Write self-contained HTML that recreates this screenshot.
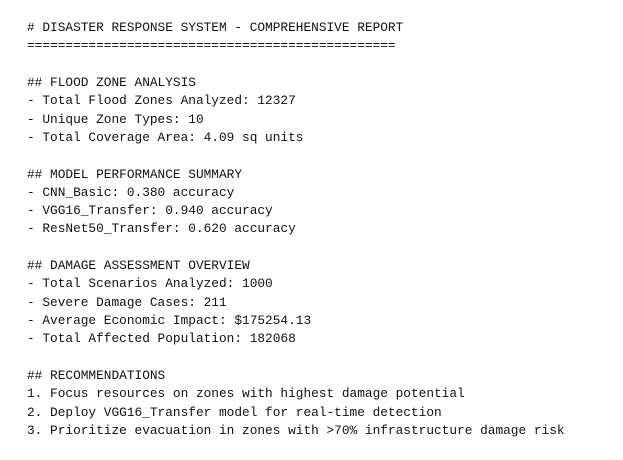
<!DOCTYPE html>
<html><head><style>
html,body{margin:0;padding:0;background:#fff;width:623px;height:460px;overflow:hidden}
pre{margin:0;position:absolute;left:27px;top:19px;font-family:"Liberation Mono",monospace;font-size:12.8px;line-height:18.32px;color:#111}
</style></head><body>
<pre># DISASTER RESPONSE SYSTEM - COMPREHENSIVE REPORT
================================================

## FLOOD ZONE ANALYSIS
- Total Flood Zones Analyzed: 12327
- Unique Zone Types: 10
- Total Coverage Area: 4.09 sq units

## MODEL PERFORMANCE SUMMARY
- CNN_Basic: 0.380 accuracy
- VGG16_Transfer: 0.940 accuracy
- ResNet50_Transfer: 0.620 accuracy

## DAMAGE ASSESSMENT OVERVIEW
- Total Scenarios Analyzed: 1000
- Severe Damage Cases: 211
- Average Economic Impact: $175254.13
- Total Affected Population: 182068

## RECOMMENDATIONS
1. Focus resources on zones with highest damage potential
2. Deploy VGG16_Transfer model for real-time detection
3. Prioritize evacuation in zones with &gt;70% infrastructure damage risk</pre>
</body></html>
